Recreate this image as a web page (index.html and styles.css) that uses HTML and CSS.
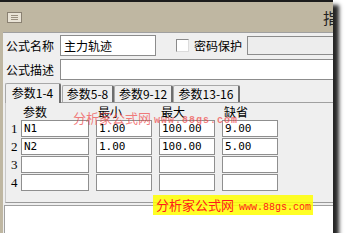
FILE: index.html
```html
<!DOCTYPE html>
<html lang="zh-CN">
<head>
    <meta charset="UTF-8">
    <title>指标公式编辑器</title>
    <link rel="stylesheet" href="styles.css">
</head>
<body>
    <div class="window">
        <div class="titlebar">
            <span class="sysicon"><i></i><i></i><i></i></span>
            <span class="title">指标</span>
        </div>
        <div class="client">
            <div class="line">
                <span class="label">公式名称</span>
                <span class="field name">主力轨迹</span>
                <span class="check"></span>
                <span class="label2">密码保护</span>
                <span class="field pwd"></span>
            </div>
            <div class="line second">
                <span class="label">公式描述</span>
                <span class="field desc"></span>
            </div>

            <div class="tabs">
                <span class="tab active t1">参数1-4</span>
                <span class="tab t2">参数5-8</span>
                <span class="tab t3">参数9-12</span>
                <span class="tab t4">参数13-16</span>
            </div>

            <div class="panel">
                <div class="grid">
                    <span></span>
                    <span class="head">参数</span>
                    <span class="head">最小</span>
                    <span class="head">最大</span>
                    <span class="head">缺省</span>

                    <span class="num">1</span>
                    <span class="cell">N1</span>
                    <span class="cell">1.00</span>
                    <span class="cell">100.00</span>
                    <span class="cell">9.00</span>

                    <span class="num">2</span>
                    <span class="cell">N2</span>
                    <span class="cell">1.00</span>
                    <span class="cell">100.00</span>
                    <span class="cell">5.00</span>

                    <span class="num">3</span>
                    <span class="cell"></span>
                    <span class="cell"></span>
                    <span class="cell"></span>
                    <span class="cell"></span>

                    <span class="num">4</span>
                    <span class="cell"></span>
                    <span class="cell"></span>
                    <span class="cell"></span>
                    <span class="cell"></span>
                </div>
            </div>

            <div class="memo"></div>

            <!-- site watermarks stamped over the screenshot -->
            <div class="watermark">分析家公式网 <span>www.88gs.com</span></div>
            <div class="stamp">分析家公式网 <span>www.88gs.com</span></div>
        </div>
    </div>
</body>
</html>
```

FILE: styles.css
```css
* {
    margin: 0;
    padding: 0;
    box-sizing: border-box;
}
body {
    background: #fff;
    font-family: "Noto Sans CJK SC", "Liberation Sans", sans-serif;
    font-size: 12px;
    color: #000;
    overflow: hidden;
}
.window {
    width: 333px;
    height: 233px;
    background: #bfb7a2;
    border-top: 2px solid #1c1c1c;
    padding-left: 3px;
    display: flex;
    flex-direction: column;
    box-shadow: 6px 5px 4px rgba(0, 0, 0, 0.85);
}
.titlebar {
    height: 30px;
    flex: none;
    display: flex;
    align-items: center;
    padding-left: 4px;
    overflow: hidden;
    white-space: nowrap;
}
.sysicon {
    width: 15px;
    height: 11px;
    flex: none;
    background: #e9e3d6;
    border: 1px solid #8a8172;
    display: flex;
    flex-direction: column;
    justify-content: center;
    gap: 1px;
    padding: 0 3px;
}
.sysicon i {
    display: block;
    height: 1px;
    background: #9a9080;
}
.title {
    flex: none;
    margin-left: 301px;
    font-size: 15px;
    color: #222;
}
.client {
    flex: 1;
    position: relative;
    background: #efefef;
    border-top: 1px solid #a0a0a0;
    overflow: hidden;
    display: flex;
    flex-direction: column;
}
.line {
    display: flex;
    align-items: center;
    height: 21px;
    margin-top: 2px;
    padding-left: 3px;
    white-space: nowrap;
}
.line > span {
    flex: none;
}
.line.second {
    margin-top: 3px;
}
.label {
    width: 54px;
    line-height: 16px;
}
.label2 {
    margin-left: 5px;
    line-height: 16px;
}
.field {
    height: 21px;
    background: #fff;
    border: 1px solid #8c8c8c;
    padding-left: 3px;
    line-height: 19px;
    font-size: 12px;
}
.name {
    width: 96px;
}
.check {
    width: 13px;
    height: 13px;
    margin-left: 20px;
    background: #fff;
    border: 1px solid #8a8a8a;
    border-right-color: #dcdcdc;
    border-bottom-color: #dcdcdc;
}
.pwd {
    width: 100px;
    height: 19px;
    margin-left: 5px;
    background: #ededed;
}
.desc {
    width: 290px;
}
.tabs {
    margin-top: 3px;
    margin-left: 2px;
    height: 20px;
    flex: none;
    display: flex;
    align-items: flex-end;
    border-bottom: 1px solid #a0a0a0;
    white-space: nowrap;
}
.tab {
    flex: none;
    height: 17px;
    line-height: 16px;
    text-align: center;
    background: #efefef;
    border: 1px solid #a8a8a8;
    border-bottom: none;
    border-right: 2px solid #6e6e6e;
    border-radius: 2px 2px 0 0;
}
.tab.active {
    height: 20px;
    margin-bottom: -1px;
    line-height: 18px;
    position: relative;
    z-index: 1;
}
.t1 { width: 56px; }
.t2 { width: 52px; margin-left: 1px; }
.t3 { width: 59px; }
.t4 { width: 67px; }
.panel {
    margin-left: 2px;
    height: 100px;
    flex: none;
    border-left: 1px solid #c8c8c8;
    border-bottom: 1px solid #9a9a9a;
}
.grid {
    display: grid;
    grid-template-columns: 8px 68px 56px 56px 56px;
    grid-template-rows: 16px repeat(4, 17px);
    column-gap: 7px;
    row-gap: 1px;
}
.head {
    padding-left: 2px;
    line-height: 15px;
    align-self: end;
}
.num {
    padding-left: 5px;
    line-height: 17px;
    font-family: "Liberation Serif", serif;
    font-size: 13px;
    white-space: nowrap;
}
.cell {
    background: #fff;
    border: 1px solid #8f8f8f;
    padding-left: 2px;
    line-height: 15px;
    font-family: "DejaVu Sans Mono", monospace;
    font-size: 11px;
}
.memo {
    flex: 1;
    margin-top: 2px;
    margin-left: 1px;
    background: #fff;
    border-top: 1px solid #a0a0a0;
    border-left: 1px solid #a0a0a0;
}
.watermark {
    position: absolute;
    left: 70px;
    top: 78px;
    font-size: 13px;
    line-height: 14px;
    color: rgba(240, 70, 70, 0.7);
    white-space: nowrap;
}
.watermark span {
    font-family: "Liberation Mono", monospace;
    font-size: 10px;
    font-weight: bold;
    letter-spacing: 1px;
}
.stamp {
    position: absolute;
    left: 150px;
    top: 162px;
    width: 160px;
    height: 20px;
    padding-left: 3px;
    background: rgba(255, 255, 0, 0.85);
    color: #ff1a1a;
    font-size: 13px;
    line-height: 20px;
    white-space: nowrap;
}
.stamp span {
    margin-left: 2px;
    font-family: "Liberation Mono", monospace;
    font-size: 10px;
}
```
